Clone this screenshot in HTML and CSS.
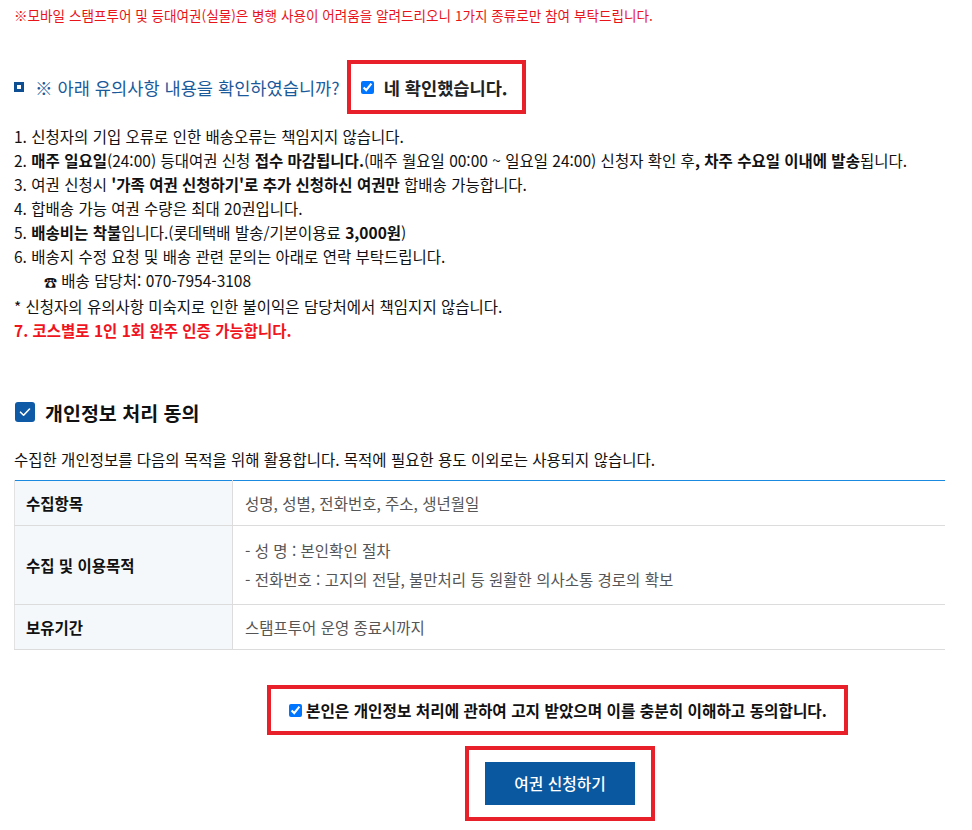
FILE: index.html
```html
<!DOCTYPE html>
<html lang="ko">
<head>
<meta charset="utf-8">
<link rel="stylesheet" href="styles.css">
</head>
<body>
<div class="page">
  <p class="notice">※모바일 스탬프투어 및 등대여권(실물)은 병행 사용이 어려움을 알려드리오니 1가지 종류로만 참여 부탁드립니다.</p>

  <div class="confirm-row">
    <span class="sq-icon"></span>
    <span class="confirm-q">※ 아래 유의사항 내용을 확인하였습니까?</span>
    <label class="redbox confirm-box"><input type="checkbox" checked><span>네 확인했습니다.</span></label>
  </div>

  <ul class="rules">
    <li>1. 신청자의 기입 오류로 인한 배송오류는 책임지지 않습니다.</li>
    <li>2. <b>매주 일요일</b>(24:00) 등대여권 신청 <b>접수 마감됩니다.</b>(매주 월요일 00:00 ~ 일요일 24:00) 신청자 확인 후<b>, 차주 수요일 이내에 발송</b>됩니다.</li>
    <li>3. 여권 신청시 <b>'가족 여권 신청하기'로 추가 신청하신 여권만</b> 합배송 가능합니다.</li>
    <li>4. 합배송 가능 여권 수량은 최대 20권입니다.</li>
    <li>5. <b>배송비는 착불</b>입니다.(롯데택배 발송/기본이용료 <b>3,000원</b>)</li>
    <li>6. 배송지 수정 요청 및 배송 관련 문의는 아래로 연락 부탁드립니다.</li>
    <li class="indent"><span class="phone">☎</span> 배송 담당처: 070-7954-3108</li>
    <li>* 신청자의 유의사항 미숙지로 인한 불이익은 담당처에서 책임지지 않습니다.</li>
    <li class="red">7. 코스별로 1인 1회 완주 인증 가능합니다.</li>
  </ul>

  <h2 class="section-title">
    <span class="check-icon"><svg width="20" height="20" viewBox="0 0 20 20"><path d="M5.5 10.2 L8.6 13.2 L14.5 7" fill="none" stroke="#fff" stroke-width="1.6" stroke-linecap="round" stroke-linejoin="round"/></svg></span>
    개인정보 처리 동의
  </h2>
  <p class="desc">수집한 개인정보를 다음의 목적을 위해 활용합니다. 목적에 필요한 용도 이외로는 사용되지 않습니다.</p>

  <table class="info">
    <tr class="r1"><th>수집항목</th><td>성명, 성별, 전화번호, 주소, 생년월일</td></tr>
    <tr class="r2"><th>수집 및 이용목적</th><td><div>- 성 명 : 본인확인 절차</div><div>- 전화번호 : 고지의 전달, 불만처리 등 원활한 의사소통 경로의 확보</div></td></tr>
    <tr class="r1"><th>보유기간</th><td>스탬프투어 운영 종료시까지</td></tr>
  </table>

  <label class="redbox agree-box"><input type="checkbox" checked><span>본인은 개인정보 처리에 관하여 고지 받았으며 이를 충분히 이해하고 동의합니다.</span></label>

  <div class="redbox btn-box"><button class="submit">여권 신청하기</button></div>
</div>
</body>
</html>
```

FILE: styles.css
```css
html, body {
  margin: 0;
  padding: 0;
  background: #fff;
}
body {
  font-family: "Noto Sans CJK KR", "Noto Sans", sans-serif;
  color: #111;
}
.page {
  padding: 0 27px 0 14px;
}
.notice {
  margin: 0;
  padding-top: 5px;
  font-size: 13.6px;
  line-height: 20px;
  color: #e8141a;
}
.confirm-row {
  display: flex;
  align-items: center;
  margin-top: 35px;
  height: 54px;
}
.sq-icon {
  width: 10px;
  height: 10px;
  box-sizing: border-box;
  border: 3px solid #0e4e93;
  background: #fff;
  margin-right: 11px;
}
.confirm-q {
  font-size: 17.6px;
  color: #1a5a9a;
}
.redbox {
  border: 4px solid #e8202a;
  box-sizing: border-box;
}
.confirm-box {
  display: flex;
  align-items: center;
  margin-left: 7px;
  width: 179px;
  height: 54px;
  padding-left: 10px;
  font-size: 17.6px;
  font-weight: 700;
  color: #222;
}
.confirm-box input {
  width: 13px;
  height: 13px;
  margin: 0 10px 0 0;
}
.rules {
  list-style: none;
  margin: 10px 0 0;
  padding: 0;
  font-size: 15.5px;
  line-height: 24px;
}
.rules b { font-weight: 700; }
.rules .indent { padding-left: 30px; }
.phone { font-size: 13px; }
.rules .red {
  color: #f0141e;
  font-weight: 700;
}
.section-title {
  display: flex;
  align-items: center;
  margin: 55px 0 0;
  font-size: 19.5px;
  font-weight: 700;
  color: #111;
  height: 30px;
}
.check-icon {
  width: 20px;
  height: 20px;
  border-radius: 3px;
  background: #0e5aa7;
  margin: 0 10px 0 1px;
  display: flex;
}
.desc {
  margin: 20px 0 0;
  font-size: 15.5px;
  line-height: 24px;
}
.info {
  margin-top: 9px;
  width: 931px;
  table-layout: fixed;
  border-collapse: collapse;
  border-top: 1px solid #1a8ae0;
  font-size: 15.5px;
}
.info th, .info td {
  border-bottom: 1px solid #dcdcdc;
  text-align: left;
  vertical-align: middle;
}
.info th {
  width: 218px;
  box-sizing: border-box;
  background: #f5f8fb;
  font-weight: 700;
  color: #111;
  padding: 0 0 0 11px;
  border-left: 1px solid #e2e2e2;
  border-right: 1px solid #dcdcdc;
}
.info td {
  color: #555;
  padding: 0 0 0 12px;
}
.info .r1 { height: 45px; }
.info .r2 { height: 79px; }
.info .r2 td div { line-height: 29px; }
.agree-box {
  display: flex;
  align-items: center;
  width: 581px;
  height: 50px;
  margin: 35px 0 0 253px;
  padding-left: 18px;
  font-size: 15.7px;
  font-weight: 700;
  color: #111;
}
.agree-box input {
  width: 13px;
  height: 13px;
  margin: 0 4px 0 0;
}
.btn-box {
  width: 190px;
  height: 75px;
  margin: 11px 0 0 451px;
  display: flex;
  align-items: center;
  justify-content: center;
}
.submit {
  width: 150px;
  height: 43px;
  border: 0;
  background: #0a58a0;
  color: #fff;
  font-family: "Noto Sans CJK KR", sans-serif;
  font-size: 15.8px;
  font-weight: 500;
  cursor: pointer;
}
```
